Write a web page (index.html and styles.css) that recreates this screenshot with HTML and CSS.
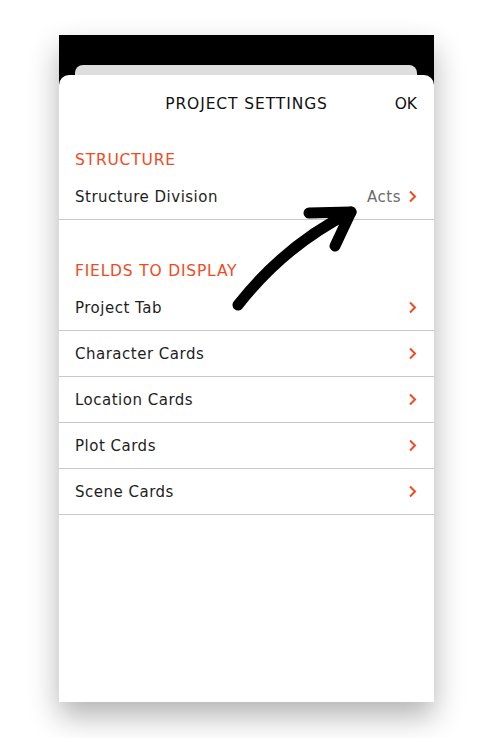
FILE: index.html
```html
<!DOCTYPE html>
<html lang="en">
<head>
  <meta charset="UTF-8">
  <meta name="viewport" content="width=device-width, initial-scale=1.0">
  <title>Project Settings</title>
  <link rel="stylesheet" href="styles.css">
</head>
<body>
  <div class="page">
    <div class="phone">
      <div class="card-behind"></div>

      <div class="sheet">
        <!-- Header -->
        <div class="sheet-header">
          <span class="title">PROJECT SETTINGS</span>
          <span class="ok">OK</span>
        </div>

        <!-- Structure -->
        <div class="section first">
          <h2 class="section-title">STRUCTURE</h2>
          <div class="row">
            <span class="label">Structure Division</span>
            <span class="value">Acts</span>
            <svg class="chevron" viewBox="0 0 9 13"><path d="M2 1.5 L7 6.5 L2 11.5"/></svg>
          </div>
        </div>

        <!-- Fields -->
        <div class="section">
          <h2 class="section-title">FIELDS TO DISPLAY</h2>
          <div class="row">
            <span class="label">Project Tab</span>
            <svg class="chevron" viewBox="0 0 9 13"><path d="M2 1.5 L7 6.5 L2 11.5"/></svg>
          </div>
          <div class="row">
            <span class="label">Character Cards</span>
            <svg class="chevron" viewBox="0 0 9 13"><path d="M2 1.5 L7 6.5 L2 11.5"/></svg>
          </div>
          <div class="row">
            <span class="label">Location Cards</span>
            <svg class="chevron" viewBox="0 0 9 13"><path d="M2 1.5 L7 6.5 L2 11.5"/></svg>
          </div>
          <div class="row">
            <span class="label">Plot Cards</span>
            <svg class="chevron" viewBox="0 0 9 13"><path d="M2 1.5 L7 6.5 L2 11.5"/></svg>
          </div>
          <div class="row">
            <span class="label">Scene Cards</span>
            <svg class="chevron" viewBox="0 0 9 13"><path d="M2 1.5 L7 6.5 L2 11.5"/></svg>
          </div>
        </div>
      </div>

      <!-- Hand drawn pointer -->
      <svg class="pointer" width="375" height="667" viewBox="0 0 375 667">
        <path d="M179 270 Q226 210 292 177"/>
        <path d="M250 178 L292 177 L276 211"/>
      </svg>
    </div>
  </div>
</body>
</html>
```

FILE: styles.css
```css
body {
  margin: 0;
  background: #fff;
  font-family: 'DejaVu Sans', sans-serif;
  color: #1e1e1e;
}
.page {
  padding: 35px 0 36px 59px;
}
.phone {
  position: relative;
  width: 375px;
  height: 667px;
  background: #000;
  display: flex;
  flex-direction: column;
  overflow: hidden;
  box-shadow: 0 14px 28px rgba(0, 0, 0, 0.3);
}
.card-behind {
  height: 10px;
  margin: 30px 17px 0 16px;
  background: #dedede;
  border-radius: 8px 8px 0 0;
}
.sheet {
  flex: 1;
  background: #fff;
  border-radius: 10px 10px 0 0;
}
.sheet-header {
  height: 56px;
  box-sizing: border-box;
  padding-top: 2px;
  display: flex;
  align-items: center;
  justify-content: center;
  position: relative;
  font-size: 15.5px;
  letter-spacing: 0.9px;
  color: #111;
}
.sheet-header .ok {
  position: absolute;
  right: 17px;
  letter-spacing: 0;
}
.section {
  margin-top: 22px;
}
.section.first {
  margin-top: 0;
}
.section-title {
  margin: 0;
  padding: 21px 16px 5px;
  font-size: 15.5px;
  line-height: 17px;
  letter-spacing: 0.8px;
  font-weight: normal;
  color: #ef4b23;
}
.row {
  height: 46px;
  box-sizing: border-box;
  display: flex;
  align-items: center;
  padding: 0 17px 0 16px;
  border-bottom: 1px solid #c9c9c9;
  font-size: 15px;
  letter-spacing: 0.5px;
}
.label {
  flex: 1;
}
.value {
  color: #6b6b6b;
  margin-right: 7px;
}
.chevron {
  width: 9px;
  height: 13px;
  fill: none;
  stroke: #ef4b23;
  stroke-width: 2;
}
.pointer {
  position: absolute;
  left: 0;
  top: 0;
  fill: none;
  stroke: #000;
  stroke-width: 11;
  stroke-linecap: round;
  stroke-linejoin: round;
}
```
